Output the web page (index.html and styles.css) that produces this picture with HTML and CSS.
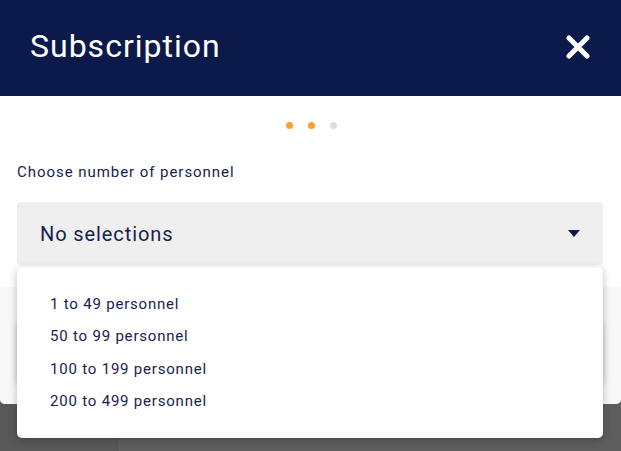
FILE: index.html
```html
<!DOCTYPE html>
<html lang="en">
  <head>
    <meta charset="UTF-8" />
    <title>Subscription</title>
    <link rel="stylesheet" href="styles.css">
  </head>
  <body>
    <div class="backdrop">
      <div class="backdrop-left"></div>
      <div class="backdrop-right"></div>
    </div>

    <div class="modal">
      <div class="modal-header">
        <h1>Subscription</h1>
        <button class="close" aria-label="Close">
          <svg width="24" height="24" viewBox="0 0 24 24">
            <path d="M3 3 L21 21 M21 3 L3 21" stroke="#fff" stroke-width="5" stroke-linecap="round" fill="none" />
          </svg>
        </button>
      </div>

      <div class="modal-body">
        <div class="steps">
          <span class="dot active"></span>
          <span class="dot active"></span>
          <span class="dot"></span>
        </div>

        <label class="field-label">Choose number of personnel</label>
        <div class="select-wrap">
          <div class="select">
            <span>No selections</span>
            <span class="caret"></span>
          </div>
          <ul class="options">
            <li>1 to 49 personnel</li>
            <li>50 to 99 personnel</li>
            <li>100 to 199 personnel</li>
            <li>200 to 499 personnel</li>
          </ul>
        </div>
      </div>

      <div class="modal-footer">
        <div class="footer-btn"></div>
      </div>
    </div>
  </body>
</html>
```

FILE: styles.css
```css
body {
  margin: 0;
  font-family: Roboto, "Liberation Sans", sans-serif;
  background-color: #5c5c5c;
  height: 451px;
  overflow: hidden;
  position: relative;
}
.backdrop {
  position: absolute;
  left: 0;
  right: 0;
  top: 404px;
  bottom: 0;
  display: flex;
}
.backdrop-left {
  width: 117px;
  background: #585858;
  border-right: 1px solid #525252;
}
.backdrop-right {
  flex: 1;
  background: #5e5e5e;
}
.modal {
  position: relative;
  background: #fff;
  height: 404px;
  border-radius: 0 0 5px 5px;
  display: flex;
  flex-direction: column;
}
.modal-header {
  height: 96px;
  background: #0c1a4b;
  display: flex;
  align-items: center;
  justify-content: space-between;
  padding: 0 31px 0 30px;
  box-sizing: border-box;
}
.modal-header h1 {
  margin: 0;
  color: #fff;
  font-weight: 400;
  font-size: 32px;
  letter-spacing: 1px;
  margin-top: -4px;
}
.close {
  background: none;
  border: 0;
  padding: 0;
  width: 24px;
  height: 24px;
  margin-top: -3px;
}
.modal-body {
  padding: 0 18px 0 17px;
}
.steps {
  display: flex;
  justify-content: center;
  gap: 15px;
  margin-top: 26px;
  margin-left: 2px;
}
.dot {
  width: 7px;
  height: 7px;
  border-radius: 50%;
  background: #dddddd;
}
.dot.active {
  background: #f9a131;
}
.field-label {
  display: block;
  margin-top: 34px;
  color: #17224d;
  font-size: 15px;
  letter-spacing: 0.95px;
}
.select-wrap {
  position: relative;
  margin-top: 21px;
}
.select {
  height: 63px;
  background: #efefef;
  border-radius: 4px;
  display: flex;
  align-items: center;
  justify-content: space-between;
  padding: 0 23px 0 23px;
  color: #17224d;
  font-size: 20px;
  letter-spacing: 0.9px;
}
.caret {
  width: 0;
  height: 0;
  border-left: 6px solid transparent;
  border-right: 6px solid transparent;
  border-top: 7px solid #0c1a4b;
}
.options {
  position: absolute;
  z-index: 2;
  top: 65px;
  left: 0;
  right: 0;
  margin: 0;
  padding: 21px 0 20px 33px;
  list-style: none;
  background: #fff;
  border-radius: 5px;
  box-shadow: 0 2px 8px rgba(0, 0, 0, 0.25);
}
.options li {
  color: #17224d;
  font-size: 15px;
  line-height: 32.4px;
  letter-spacing: 0.8px;
}
.modal-footer {
  margin-top: auto;
  height: 117px;
  background: #f8f8f8;
  border-radius: 0 0 5px 5px;
  padding: 33px 18px 0 17px;
  box-sizing: border-box;
}
.footer-btn {
  height: 65px;
  background: #fff;
  border-radius: 6px;
  box-shadow: 0 1px 6px rgba(0, 0, 0, 0.2);
}
```
